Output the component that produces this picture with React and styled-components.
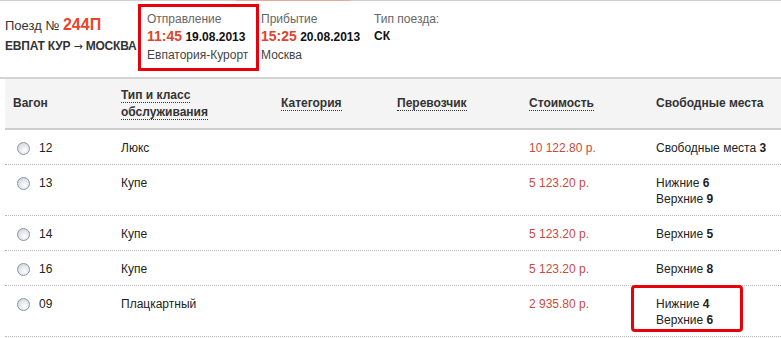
import React from "react";
import styled, { createGlobalStyle } from "styled-components";

const GlobalStyle = createGlobalStyle`
  body {
    margin: 0;
    background: #fff;
    font-family: "Liberation Sans", Arial, sans-serif;
    color: #222;
  }
`;

const Page = styled.div`
  width: 781px;
  height: 338px;
  overflow: hidden;
  position: relative;
`;

const TabLine = styled.div`
  display: flex;
  height: 1px;
  background: #cfcfcf;
`;

const TabActive = styled.div`
  margin-left: 236px;
  width: 114px;
  background: #e9a89c;
`;

const InfoBar = styled.div`
  display: flex;
  align-items: flex-start;
  height: 78px;
  border-bottom: 2px solid #d4d4d4;
  box-sizing: border-box;
  padding-top: 3px;
`;

const TrainBlock = styled.div`
  width: 138px;
  flex-shrink: 0;
  padding: 12px 0 0 5px;
  box-sizing: border-box;
  white-space: nowrap;
`;

const TrainNo = styled.div`
  font-size: 13px;
  line-height: 18px;
  color: #333;
`;

const TrainNum = styled.span`
  font-size: 16px;
  font-weight: bold;
  color: #e8452c;
`;

const Route = styled.div`
  font-size: 12px;
  font-weight: bold;
  line-height: 18px;
  margin-top: 2px;
  letter-spacing: -0.2px;
  color: #333;
`;

const Arrow = styled.span`
  font-family: "DejaVu Sans", sans-serif;
  font-weight: normal;
  font-size: 11px;
`;

const Point = styled.div`
  width: ${(p) => p.$w}px;
  flex-shrink: 0;
  box-sizing: border-box;
  padding: ${(p) => (p.$boxed ? "4px 0 4px 6px" : "7px 0 0 2px")};
  border: ${(p) => (p.$boxed ? "3px solid #e8000b" : "none")};
  white-space: nowrap;
`;

const Label = styled.div`
  font-size: 12px;
  line-height: 16px;
  color: #666;
`;

const When = styled.div`
  font-size: 12px;
  font-weight: bold;
  line-height: 18px;
  color: #111;
`;

const Time = styled.span`
  font-size: 14px;
  color: #e0452c;
`;

const Station = styled.div`
  font-size: 12px;
  line-height: 18px;
  color: #444;
`;

const Table = styled.div`
  margin-left: 5px;
`;

const cols = "108px 160px 116px 132px 127px 1fr";

const HeadRow = styled.div`
  display: grid;
  grid-template-columns: ${cols};
  align-items: center;
  height: 49px;
  background: #f4f4f4;
  border-bottom: 2px solid #cdcdcd;
`;

const HeadCell = styled.div`
  padding-left: 8px;
  font-size: 12px;
  font-weight: bold;
  line-height: 17px;
  color: #333;
`;

const Sort = styled.span`
  border-bottom: 1px dotted #333;
`;

const Row = styled.div`
  display: grid;
  grid-template-columns: ${cols};
  align-items: start;
  padding: 10px 0 8px;
  border-bottom: 1px dotted #b8b8b8;
`;

const Cell = styled.div`
  position: relative;
  padding-left: 8px;
  font-size: 12px;
  line-height: 16px;
  color: #222;
`;

const CarCell = styled(Cell)`
  display: flex;
  align-items: center;
  padding-left: 12px;
  gap: 9px;
`;

const Radio = styled.span`
  width: 11px;
  height: 11px;
  border-radius: 50%;
  border: 1px solid #8896a8;
  background: radial-gradient(circle at 60% 65%, #ffffff 0%, #e6e8ec 45%, #c9ccd3 100%);
`;

const Price = styled(Cell)`
  color: #cb4a3e;
`;

const Mark = styled.div`
  position: absolute;
  left: -17px;
  top: -11px;
  width: 112px;
  height: 47px;
  box-sizing: border-box;
  border: 3px solid #e8000b;
  border-radius: 4px;
`;

const cars = [
  { n: "12", type: "Люкс", price: "10 122.80 р.", seats: [["Свободные места", 3]] },
  { n: "13", type: "Купе", price: "5 123.20 р.", seats: [["Нижние", 6], ["Верхние", 9]] },
  { n: "14", type: "Купе", price: "5 123.20 р.", seats: [["Верхние", 5]] },
  { n: "16", type: "Купе", price: "5 123.20 р.", seats: [["Верхние", 8]] },
  { n: "09", type: "Плацкартный", price: "2 935.80 р.", seats: [["Нижние", 4], ["Верхние", 6]], mark: true },
];

export default function App() {
  return (
    <Page>
      <GlobalStyle />
      <TabLine>
        <TabActive />
      </TabLine>
      <InfoBar>
        <TrainBlock>
          <TrainNo>
            Поезд № <TrainNum>244П</TrainNum>
          </TrainNo>
          <Route>
            ЕВПАТ КУР <Arrow>→</Arrow> МОСКВА
          </Route>
        </TrainBlock>
        <Point $w={121} $boxed>
          <Label>Отправление</Label>
          <When>
            <Time>11:45</Time> 19.08.2013
          </When>
          <Station>Евпатория-Курорт</Station>
        </Point>
        <Point $w={113}>
          <Label>Прибытие</Label>
          <When>
            <Time>15:25</Time> 20.08.2013
          </When>
          <Station>Москва</Station>
        </Point>
        <Point $w={120}>
          <Label>Тип поезда:</Label>
          <When>СК</When>
        </Point>
      </InfoBar>
      <Table>
        <HeadRow>
          <HeadCell>Вагон</HeadCell>
          <HeadCell>
            <Sort>Тип и класс</Sort>
            <br />
            <Sort>обслуживания</Sort>
          </HeadCell>
          <HeadCell>
            <Sort>Категория</Sort>
          </HeadCell>
          <HeadCell>
            <Sort>Перевозчик</Sort>
          </HeadCell>
          <HeadCell>
            <Sort>Стоимость</Sort>
          </HeadCell>
          <HeadCell>Свободные места</HeadCell>
        </HeadRow>
        {cars.map((c) => (
          <Row key={c.n}>
            <CarCell>
              <Radio />
              {c.n}
            </CarCell>
            <Cell>{c.type}</Cell>
            <Cell />
            <Cell />
            <Price>{c.price}</Price>
            <Cell>
              {c.seats.map(([name, count]) => (
                <div key={name}>
                  {name} <b>{count}</b>
                </div>
              ))}
              {c.mark && <Mark />}
            </Cell>
          </Row>
        ))}
      </Table>
    </Page>
  );
}
